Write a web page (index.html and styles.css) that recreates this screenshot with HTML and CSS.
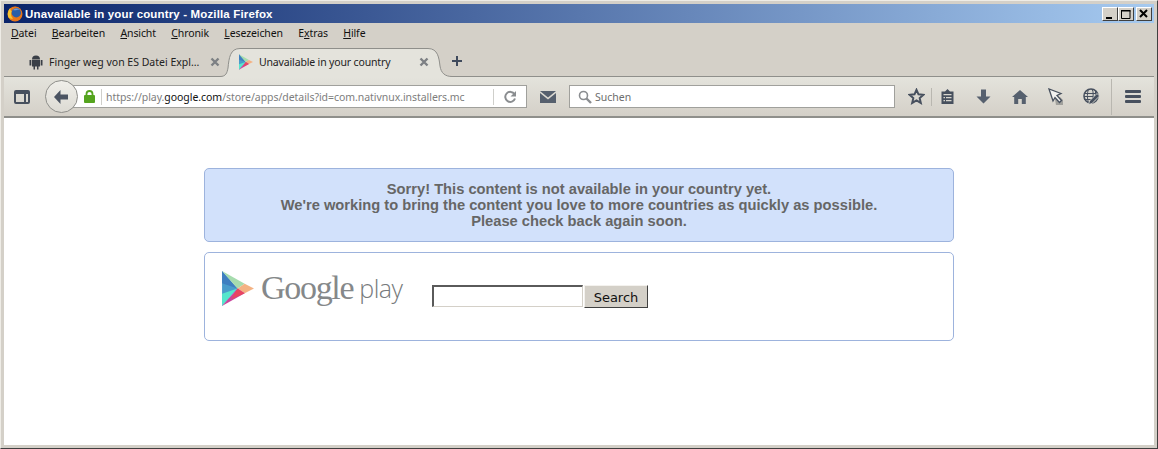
FILE: index.html
```html
<!DOCTYPE html>
<html lang="de">
<head>
<meta charset="utf-8">
<title>Unavailable in your country - Mozilla Firefox</title>
<link rel="stylesheet" href="styles.css">
</head>
<body>
<div class="window">
  <header class="titlebar">
    <svg class="fx" width="16" height="16" viewBox="0 0 16 16"><circle cx="8" cy="8" r="7.500" fill="#e8761a"/><path d="M1.500 11.500C.2 8 1 4 3.500 2c-.5 2 .5 3 1.500 3.500-1.500 2-1.200 5 1 7-2 .5-3.500 0-4.500-1z" fill="#f7c531"/><circle cx="9.300" cy="6.700" r="4.700" fill="#2a5ea8"/><path d="M6 4c2-2 5-2 7 0-1-.5-2-.5-3 0-2 .3-3 .3-4 0z" fill="#6f9bd8"/><path d="M5 1.500C8 0 12 .8 14 3.500c-2-1.500-4-1.700-6-1-1 .2-2 0-3-1z" fill="#e8761a"/></svg>
    <span class="title-text">Unavailable in your country - Mozilla Firefox</span>
    <div class="caption-btns">
      <button class="cap"><svg width="10" height="10" viewBox="0 0 10 10"><path d="M1 8h6v2H1z" fill="#000"/></svg></button>
      <button class="cap"><svg width="10" height="10" viewBox="0 0 10 10"><path d="M.5 1.500h8.500v8H.5z" fill="none" stroke="#000"/><path d="M0 1h9.500v1.500H0z" fill="#000"/></svg></button>
      <button class="cap cap-close"><svg width="10" height="10" viewBox="0 0 10 10"><path d="M1 1l7 7M8 1L1 8" stroke="#000" stroke-width="2"/></svg></button>
    </div>
  </header>

  <nav class="menubar">
    <span class="menu-item"><u>D</u>atei</span>
    <span class="menu-item"><u>B</u>earbeiten</span>
    <span class="menu-item"><u>A</u>nsicht</span>
    <span class="menu-item"><u>C</u>hronik</span>
    <span class="menu-item"><u>L</u>esezeichen</span>
    <span class="menu-item">E<u>x</u>tras</span>
    <span class="menu-item"><u>H</u>ilfe</span>
  </nav>

  <div class="tabstrip">
    <div class="tab">
      <svg class="tab-icon" width="16" height="16" viewBox="0 0 16 16"><path d="M4 5.500a4 4 0 0 1 8 0zM4 6h8v6.500H10.500V15.500h-1.500V12.500H7V15.500H5.500V12.500H4zM1.500 6h1.800v5.500H1.500zM12.700 6h1.800v5.500h-1.800z" fill="#3a3f47"/></svg>
      <span class="tab-label">Finger weg von ES Datei Expl...</span>
      <svg class="tab-close" width="10" height="10" viewBox="0 0 10 10"><path d="M1.500 1.500l7 7M8.500 1.500l-7 7" stroke="#7d8084" stroke-width="2.400"/></svg>
    </div>
    <div class="tab tab-active">
      <svg class="tab-shape" width="232" height="29" viewBox="0 0 232 29"><path d="M0 29V28.500C6 28.500 7 25 8 20 9 10 10 .5 20 .5H208C218 .5 219 10 220 18 221 25 225 28.500 232 28.500V29z" fill="#e4e3dc"/><path d="M0 28.500C6 28.500 7 25 8 20 9 10 10 .5 20 .5H208C218 .5 219 10 220 18 221 25 225 28.500 232 28.500" fill="none" stroke="#8f8f8b"/></svg>
      <svg class="tab-icon play-small" width="14" height="16" viewBox="0 0 31 34"><use href="#play"/></svg>
      <span class="tab-label">Unavailable in your country</span>
      <svg class="tab-close" width="10" height="10" viewBox="0 0 10 10"><path d="M1.500 1.500l7 7M8.500 1.500l-7 7" stroke="#7d8084" stroke-width="2.400"/></svg>
    </div>
    <svg class="newtab" width="12" height="12" viewBox="0 0 12 12"><path d="M6 1v10M1 6h10" stroke="#3f4a5c" stroke-width="2"/></svg>
  </div>

  <div class="navbar">
    <svg class="side-icon" width="16" height="14" viewBox="0 0 16 14"><rect x="1" y="1" width="14" height="12" rx="1" fill="none" stroke="#47505e" stroke-width="2"/><path d="M1 1h14v3H1zM10 4h2v9h-2z" fill="#47505e"/></svg>
    <div class="back">
      <svg width="16" height="14" viewBox="0 0 16 14"><path d="M7.500 0L1 7l6.500 7V9.500H15v-5H7.500z" fill="#4b5462"/></svg>
    </div>
    <div class="urlbar">
      <svg class="lock" width="11" height="13" viewBox="0 0 11 13"><path d="M2.500 6V4a3 3 0 0 1 6 0v2" fill="none" stroke="#55a41f" stroke-width="1.800"/><rect y="5" width="11" height="8" rx="1" fill="#55a41f"/></svg>
      <span class="url"><span class="url-dim">https://play.</span>google.com<span class="url-dim">/store/apps/details?id=com.nativnux.installers.mc</span></span>
      <svg class="reload" width="14" height="14" viewBox="0 0 14 14"><path d="M11.500 4.200A5 5 0 1 0 12 8.500" fill="none" stroke="#8a8d90" stroke-width="2"/><path d="M13 1v5.500H7.500z" fill="#8a8d90"/></svg>
    </div>
    <svg class="mail" width="16" height="12" viewBox="0 0 16 12"><path d="M0 0h16L8 6.500zM0 2l8 6.500L16 2v10H0z" fill="#56606e"/></svg>
    <div class="searchbar">
      <svg width="14" height="14" viewBox="0 0 14 14"><circle cx="5.500" cy="5.500" r="4" fill="none" stroke="#8a8d90" stroke-width="1.600"/><path d="M8.500 8.500l4.500 4.500" stroke="#8a8d90" stroke-width="2.400"/></svg>
      <span>Suchen</span>
    </div>
    <div class="tools">
      <svg class="t-star" width="17" height="17" viewBox="0 0 17 17"><path d="M8.500 1.800l2 4.500 4.900.5-3.700 3.300 1.100 4.800-4.300-2.500-4.300 2.500 1.100-4.800L1.600 6.800l4.900-.5z" fill="none" stroke="#47505e" stroke-width="2"/></svg>
      <i class="sep"></i>
      <svg class="t-clip" width="15" height="15" viewBox="0 0 15 15"><path d="M7.500 0L10 2.500h3.500V15H1.500V2.500H5z" fill="#47505e"/><path d="M3.500 5h8v1.300h-8zM6 8h5.500v1.300H6zM6 11h5.500v1.300H6zM3.500 8H5v1.300H3.500zM3.500 11H5v1.300H3.500z" fill="#d8d6cf"/></svg>
      <svg class="t-down" width="15" height="15" viewBox="0 0 15 15"><path d="M5 .5h5v7h4.500L7.500 14.500.5 7.500H5z" fill="#56606e"/></svg>
      <svg class="t-home" width="16" height="14" viewBox="0 0 16 14"><path d="M8 0l8 7h-2.200v7H9.800V9H6.200v5H2.200V7H0z" fill="#56606e"/></svg>
      <svg class="t-cursor" width="16" height="17" viewBox="0 0 16 17"><path d="M7 11l5-2 3 3v5H8z" fill="#a0a09c"/><path d="M1 1l4 12 2-3.500 4.500 5 2-2-4.500-5 4-2z" fill="#f2f2f0" stroke="#47505e" stroke-width="1.300"/></svg>
      <svg class="t-globe" width="17" height="17" viewBox="0 0 17 17"><circle cx="8" cy="8" r="7" fill="#d8d6cf" stroke="#47505e" stroke-width="1.600"/><path d="M1 5.500h14M1 8.500h12M1 11.500h8M5.500 1c-1.500 4-1.500 9 0 14M9 1c1.500 3 1.500 6 .5 10M12.500 3v6" fill="none" stroke="#47505e" stroke-width="1"/><path d="M14 5.500L16.500 8 9 15.500l-3.500 1 1-3.500z" fill="#47505e" stroke="#e4e3dc" stroke-width=".8"/></svg>
      <i class="sep sep-tall"></i>
      <div class="hamburger"><i></i><i></i><i></i></div>
    </div>
  </div>

  <main class="page">
    <section class="notice">
      <p>Sorry! This content is not available in your country yet.</p>
      <p>We're working to bring the content you love to more countries as quickly as possible.</p>
      <p>Please check back again soon.</p>
    </section>
    <section class="searchbox">
      <div class="logo">
        <svg width="32" height="35" viewBox="0 0 31 34">
          <defs>
            <g id="play">
              <path d="M0 0L15 17 0 34z" fill="#4a9ccb"/>
              <path d="M0 0v12L15 17z" fill="#3f7fc0"/>
              <path d="M0 34L0 22 15 17z" fill="#56e6cc"/>
              <path d="M0 0L22 12.500 15 17z" fill="#a6dcae"/>
              <path d="M22 12.500L31 17 22 21.500 15 17z" fill="#f4b283"/>
              <path d="M0 34L15 17 22 21.500z" fill="#c9459c"/>
              <path d="M9 27.500L15 17 22 21.500z" fill="#e9465f"/>
            </g>
          </defs>
          <use href="#play"/>
        </svg>
        <span class="logo-google">Google</span>
        <span class="logo-play">play</span>
      </div>
      <form class="search-form">
        <input class="search-input" type="text" aria-label="Search">
        <button class="search-btn" type="button">Search</button>
      </form>
    </section>
  </main>
</div>
</body>
</html>
```
FILE: styles.css
```css
* { box-sizing: border-box; }
html, body { margin: 0; padding: 0; height: 100%; overflow: hidden; }
body { background: #d4d0c8; }

.window {
  width: 1158px;
  height: 449px;
  padding: 3px;
  display: flex;
  flex-direction: column;
  background: #d4d0c8;
  border: 1px solid;
  border-color: #eeece6 #404040 #404040 #eeece6;
  font-family: "Noto Sans", "DejaVu Sans", sans-serif;
}

.titlebar {
  flex: 0 0 19px;
  display: flex;
  align-items: center;
  padding: 0 2px 0 3px;
  background: linear-gradient(90deg, #0a246a, #a6caf0);
}
.fx { flex: none; margin-right: 2px; }
.title-text {
  font-family: "Liberation Sans", sans-serif;
  font-weight: 700;
  font-size: 11.5px;
  letter-spacing: .15px;
  color: #fff;
  white-space: nowrap;
}
.caption-btns { margin-left: auto; display: flex; }
.cap {
  width: 16px;
  height: 14px;
  padding: 0;
  display: flex;
  align-items: center;
  justify-content: center;
  background: #d4d0c8;
  border: 1px solid;
  border-color: #fff #404040 #404040 #fff;
}
.cap-close { margin-left: 2px; }

.menubar {
  flex: 0 0 22px;
  display: flex;
  align-items: center;
  padding: 0 0 2px 7px;
  gap: 15.3px;
  font-size: 10.5px;
  letter-spacing: -.1px;
  color: #111;
}

.tabstrip {
  flex: 0 0 32px;
  display: flex;
  align-items: flex-end;
  border-bottom: 1px solid #8f8f8b;
  padding-left: 17px;
}
.tab {
  width: 207px;
  height: 31px;
  display: flex;
  align-items: center;
  padding: 2px 8px 0 7px;
  font-size: 10.5px;
  color: #222;
  flex: none;
}
.tab-icon { flex: none; margin-right: 4px; }
.tab-label { white-space: nowrap; flex: 1; margin-left: 1px; position: relative; }
.tab-close { flex: none; position: relative; }
.tab-active {
  position: relative;
  width: 214px;
  margin-bottom: -1px;
  height: 32px;
  padding: 2px 13px 0 11px;
  letter-spacing: -.15px;
}
.tab-shape { position: absolute; left: -8px; top: 3px; }
.play-small { position: relative; margin-right: 5px; }
.newtab { flex: none; margin: 0 0 9px 9px; }

.navbar {
  flex: 0 0 41px;
  display: flex;
  align-items: center;
  padding: 0 0 0 10px;
  background: linear-gradient(#e4e3dc, #d4d0c8);
  border-bottom: 2px solid #8f8f8b;
}
.side-icon { flex: none; margin-right: 15px; }
.back {
  flex: none;
  width: 33px;
  height: 33px;
  border-radius: 50%;
  border: 1px solid #8e8e8a;
  background: linear-gradient(#f0efea, #dcdad3);
  display: flex;
  align-items: center;
  justify-content: center;
  position: relative;
  z-index: 1;
  padding-right: 2px;
}
.urlbar {
  flex: none;
  width: 455px;
  height: 23px;
  margin-left: -6px;
  background: #fff;
  border: 1px solid #a0a09c;
  display: flex;
  align-items: center;
  padding: 0 9px 0 11px;
  font-size: 10.5px;
  letter-spacing: -.05px;
}
.lock { flex: none; margin-right: 6px; }
.url {
  flex: 1;
  border-left: 1px solid #cfcfcb;
  border-right: 1px solid #cfcfcb;
  padding-left: 4px;
  white-space: nowrap;
  color: #111;
  line-height: 16px;
}
.url-dim { color: #7d7d7d; }
.reload { flex: none; margin-left: 9px; }
.mail { flex: none; margin-left: 13px; }
.searchbar {
  flex: none;
  width: 326px;
  height: 23px;
  margin-left: 13px;
  background: #fff;
  border: 1px solid #a0a09c;
  display: flex;
  align-items: center;
  padding-left: 8px;
  gap: 3px;
  font-size: 10.5px;
  color: #6d6d6d;
}
.tools { flex: 1; display: flex; align-items: center; padding-left: 13px; }
.tools svg { flex: none; }
.sep { flex: none; width: 1px; height: 18px; background: #b9b7b0; }
.t-star { margin-right: 6px; }
.t-clip { margin-left: 8px; }
.t-down { margin-left: 21px; }
.t-home { margin-left: 21px; }
.t-cursor { margin-left: 20px; }
.t-globe { margin-left: 19px; }
.sep-tall { height: 36px; margin-left: 11px; }
.hamburger { margin-left: 13px; display: flex; flex-direction: column; gap: 2px; }
.hamburger i { display: block; width: 16px; height: 3px; background: #47505e; border-radius: 1px; }

.page {
  flex: 1;
  background: #fff;
  display: flex;
  flex-direction: column;
  align-items: center;
  padding-top: 50px;
  gap: 10px;
  font-family: "Liberation Sans", Arial, sans-serif;
}
.notice {
  width: 750px;
  height: 74px;
  padding: 12px 0;
  background: #d2e1fb;
  border: 1px solid #9db3dd;
  border-radius: 5px;
  text-align: center;
  font-weight: 700;
  font-size: 14.7px;
  line-height: 16px;
  color: #666;
}
.notice p { margin: 0; }
.searchbox {
  width: 750px;
  height: 89px;
  border: 1px solid #9db3dd;
  border-radius: 5px;
  display: flex;
  align-items: flex-start;
  padding: 17px 0 0 17px;
}
.logo { flex: none; width: 210px; height: 36px; display: flex; align-items: center; }
.logo-google {
  font-family: "Liberation Serif", serif;
  font-size: 34px;
  letter-spacing: -1.300px;
  color: #85888a;
  margin-left: 7px;
  line-height: 36px;
}
.logo-play {
  font-family: "Open Sans", sans-serif;
  font-weight: 300;
  font-size: 25px;
  letter-spacing: -.5px;
  color: #777a7c;
  margin-left: 6px;
  line-height: 36px;
}
.search-form { display: flex; align-items: flex-start; margin-top: 15px; }
.search-input {
  width: 151px;
  height: 22px;
  padding: 0;
  background: #fff;
  border: 1px solid;
  border-width: 2px 1px 1px 2px;
  border-color: #5a5a5a #d4d0c8 #d4d0c8 #5a5a5a;
}
.search-btn {
  width: 64px;
  height: 23px;
  margin-left: 1px;
  padding: 1px 0 0;
  background: #d4d0c8;
  border: 1px solid;
  border-color: #f4f2ee #404040 #404040 #f4f2ee;
  font-family: "DejaVu Sans", sans-serif;
  font-size: 13px;
  color: #111;
}
```
